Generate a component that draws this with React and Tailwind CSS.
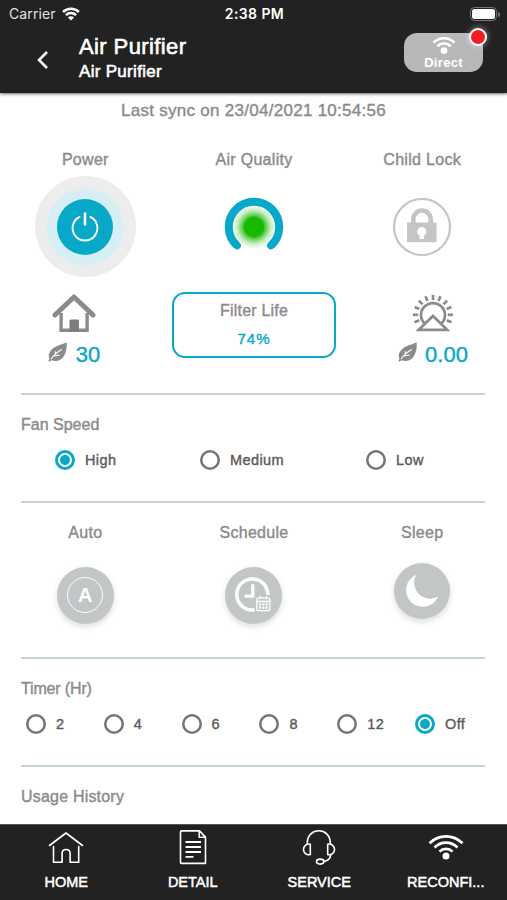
import { useState } from 'react';

const FAN_SPEEDS = [
  { label: 'High', width: 'w-[145px]' },
  { label: 'Medium', width: 'w-[166px]' },
  { label: 'Low', width: 'w-[100px]' },
];
const TIMERS = ['2', '4', '6', '8', '12', 'Off'];

function StatusWifi() {
  return (
    <svg width="18" height="14.4" viewBox="0 0 20 16" fill="none" stroke="white" strokeWidth="2.9">
      <path d="M1.2 5.5a12.6 12.6 0 0 1 17.6 0" />
      <path d="M4.4 9a8 8 0 0 1 11.2 0" />
      <path d="M10 15 6.6 11.7a4.6 4.6 0 0 1 6.800 0Z" fill="white" stroke="none" />
    </svg>
  );
}

function DirectWifi() {
  return (
    <svg width="24" height="19" viewBox="0 0 24 19" fill="none" stroke="white" strokeWidth="2.4">
      <path d="M1.5 6.6a14.8 14.8 0 0 1 21 0" />
      <path d="M5.4 10.3a9.2 9.2 0 0 1 13.2 0" />
      <circle cx="12" cy="14.6" r="3.4" fill="white" stroke="none" />
    </svg>
  );
}

function PowerIcon() {
  return (
    <svg width="30" height="30" viewBox="0 0 30 30" fill="none" stroke="white" strokeLinecap="round">
      <path d="M9.6 4.900a12.4 12.4 0 1 0 10.800 0" strokeWidth="1.9" />
      <path d="M15 1.5v11" strokeWidth="2.6" />
    </svg>
  );
}

function AirQualityGauge() {
  return (
    <svg width="60" height="60" viewBox="0 0 60 60" fill="none">
      <defs>
        <radialGradient id="glow">
          <stop offset="0.42" stopColor="#19b900" />
          <stop offset="0.58" stopColor="#6fd363" />
          <stop offset="0.78" stopColor="#c6eec1" />
          <stop offset="1" stopColor="#f6fcf5" />
        </radialGradient>
      </defs>
      <circle cx="30" cy="30" r="21.5" fill="url(#glow)" />
      <circle cx="30" cy="30" r="10" fill="#19b900" />
      <path d="M12.800 48.400a25.2 25.2 0 1 1 34.400 0" stroke="#08a8c8" strokeWidth="8" />
      <path d="M13 48.400l.2.2M47 48.400l-.2.2" stroke="#08a8c8" strokeWidth="7.4" strokeLinecap="round" />
    </svg>
  );
}

function LockIcon() {
  return (
    <svg width="58" height="58" viewBox="0 0 58 58" fill="none">
      <circle cx="29" cy="29" r="28" stroke="#c3c5c6" strokeWidth="2.2" />
      <path d="M20.3 25v-3.8a8.7 8.7 0 0 1 17.4 0V25" stroke="#c3c5c6" strokeWidth="4.6" />
      <rect x="14" y="24.500" width="29.5" height="19.7" fill="#c3c5c6" />
      <path d="M28.800 29a4.6 4.6 0 0 1 2.2 8.6v3.4h-4.4v-3.4a4.6 4.6 0 0 1 2.2-8.6Z" fill="white" />
    </svg>
  );
}

function IndoorIcon() {
  return (
    <svg width="44" height="40" viewBox="0 0 44 40" fill="none" stroke="#8b8b8b">
      <path d="M3 22 22 4l19 18" strokeWidth="5" strokeLinecap="round" strokeLinejoin="round" />
      <path d="M9.1 20v17.3h26V20" strokeWidth="3.4" />
      <path d="M17.5 38.5V28a1.5 1.5 0 0 1 1.500-1.500h6.500a1.500 1.500 0 0 1 1.500 1.500v10.500Z" fill="#7d7d7d" stroke="none" />
    </svg>
  );
}

function OutdoorIcon() {
  return (
    <svg width="42" height="39" viewBox="0 0 42 39" fill="none" stroke="#8b8b8b">
      <path d="M12.500 29.500a12 12 0 1 1 17 0" strokeWidth="2.700" />
      <path d="M6.800 35.800 21 22l14.200 13.800Z" strokeWidth="2.700" strokeLinejoin="miter" />
      <g strokeWidth="2.700">
        {[-112, -90, -67, -45, -22, 0, 22, 45, 67, 90, 112].map(a => (
          <path key={a} d="M21 6V.800" transform={`rotate(${a} 21 20.800)`} />
        ))}
      </g>
    </svg>
  );
}

function Leaf() {
  return (
    <svg width="20" height="21" viewBox="0 0 20 21" fill="none">
      <path d="M18.700.500C12.500 3 7 3.800 3.400 7.800.500 11 .200 14.300 1.500 16.900L.300 18.700l1.400 1.100 1.500-1.600c4.800 1.600 9.300.600 12.100-3.200C18.300 11 19 6 18.700.500Z" fill="#8b8b8b" />
      <path d="M3 17.200C5.800 12.800 8.800 10 13.800 7.400M7.300 12.500v-3.300M6.200 13.900l5.300-.900" stroke="white" strokeWidth="1.100" />
    </svg>
  );
}

function ScheduleIcon() {
  return (
    <svg width="58" height="58" viewBox="0 0 58 58" fill="none" stroke="white">
      <circle cx="27.800" cy="28.500" r="15.800" strokeWidth="3.600" />
      <path d="M28.300 18v12.200h-8.300" strokeWidth="3.400" />
      <rect x="30" y="29" width="18" height="18" rx="3" fill="#c3c6c7" stroke="none" />
      <rect x="32.300" y="32" width="13.400" height="13" rx="2" strokeWidth="1.300" />
      <path d="M32.300 35.600h13.400M36 30.200v3M42 30.200v3" strokeWidth="1.300" />
      <path d="M34.500 38.500h9M34.500 41.800h9" strokeWidth="2.200" strokeDasharray="2.200 1.200" />
    </svg>
  );
}

function HomeIcon() {
  return (
    <svg width="36" height="36" viewBox="0 0 36 36" fill="none" stroke="white" strokeWidth="1.600" strokeLinecap="round" strokeLinejoin="round">
      <path d="M1.500 15.500 18 3l16.500 12.500" />
      <path d="M5.500 16.500v15.700h8.600V23.500c0-5.300 8-5.300 8 0v8.700h8.600V16.500" />
    </svg>
  );
}

function DetailIcon() {
  return (
    <svg width="36" height="36" viewBox="0 0 36 36" fill="none" stroke="white" strokeWidth="1.600" strokeLinejoin="round">
      <path d="M6.500.900h18l6 6.200v26.300h-24a1 1 0 0 1-1-1V1.900a1 1 0 0 1 1-1Z" />
      <path d="M24.200 1v6.300h6.300" />
      <path d="M10.500 12h15.500M10.500 17h15.500M10.500 22h15.500M10.500 26.900h8" strokeWidth="1.800" />
    </svg>
  );
}

function ServiceIcon() {
  return (
    <svg width="36" height="36" viewBox="0 0 36 36" fill="none" stroke="white" strokeWidth="1.600" strokeLinejoin="round">
      <path d="M6.300 14.500v-1.700C6.300-3.200 29.300-3.200 29.300 12.800v1.700" />
      <path d="M9.300 14.200v10.400c-4 .7-6.800-1.800-6.800-5.200s2.800-5.900 6.800-5.200Z" />
      <path d="M26.700 14.200v10.400c4 .7 6.800-1.800 6.800-5.200s-2.800-5.900-6.800-5.200Z" />
      <path d="M29.700 24.500c-.3 4.300-3 6.500-7.200 7" />
      <ellipse cx="19.200" cy="31.600" rx="3.700" ry="2.500" />
    </svg>
  );
}

function ReconfigureIcon() {
  return (
    <svg width="36" height="36" viewBox="0 0 36 36" fill="none" stroke="white" strokeWidth="2.700">
      <path d="M1.500 13.300c9.200-9.300 23.800-9.300 33 0" />
      <path d="M6.500 17.500c6.500-6.600 16.500-6.600 23 0" />
      <path d="M11.500 21.600c3.700-3.700 9.300-3.700 13 0" />
      <circle cx="18" cy="26" r="3.500" fill="white" stroke="none" />
    </svg>
  );
}

const TABS = [
  { label: 'HOME', Icon: HomeIcon },
  { label: 'DETAIL', Icon: DetailIcon },
  { label: 'SERVICE', Icon: ServiceIcon },
  { label: 'RECONFI...', Icon: ReconfigureIcon },
];

function Radio({ label, checked, onSelect }) {
  return (
    <button onClick={onSelect} className="flex h-5 items-center gap-[10px]">
      {checked ? (
        <span className="flex size-5 items-center justify-center rounded-full border-[3px] border-[#08a8c8]">
          <span className="size-[10px] rounded-full bg-[#08a8c8]" />
        </span>
      ) : (
        <span className="size-5 rounded-full shadow-[inset_0_0_0_2.5px_#757575]" />
      )}
      <span className="text-[14.5px] leading-5 tracking-[0.4px] text-[#5c5c5c] [-webkit-text-stroke:0.4px]">{label}</span>
    </button>
  );
}

function Divider() {
  return <div className="mr-[22px] ml-[21px] h-[2px] shrink-0 bg-[#c5d5d6]" />;
}

export default function App() {
  const [speed, setSpeed] = useState('High');
  const [timer, setTimer] = useState('Off');

  return (
    <div className="flex h-[900px] w-[507px] flex-col overflow-hidden bg-white font-['Liberation_Sans',Arial,sans-serif] text-[16px] leading-5 text-[#8b8b8b] [-webkit-text-stroke:0.4px]">
      <header className="z-10 h-[93px] shrink-0 bg-[#222] text-white shadow-[0_1px_3px_rgba(0,0,0,0.6)]">
        <div className="grid h-7 grid-cols-3 items-center pr-[7px] pl-[9px] font-['Inter',sans-serif] [-webkit-text-stroke:0px]">
          <div className="flex items-center gap-[6px] text-[14px] tracking-[0.1px] text-[#e0e0e0]">
            Carrier
            <StatusWifi />
          </div>
          <div className="text-center text-[14px] font-semibold tracking-[0.4px] whitespace-nowrap">2:38 PM</div>
          <div className="flex items-center justify-end gap-px">
            <div className="h-[14px] w-[27px] rounded-[4.500px] border border-[#777] p-px">
              <div className="h-full rounded-[2.500px] bg-white" />
            </div>
            <div className="h-[5px] w-[2px] rounded-r-full bg-[#777]" />
          </div>
        </div>
        <div className="flex">
          <button className="mt-[21px] ml-[36px] h-[22px] w-[43px]" aria-label="Back">
            <svg width="13" height="20" viewBox="0 0 13 20" fill="none" stroke="white" strokeWidth="2.500">
              <path d="M11 2 3 10l8 8" />
            </svg>
          </button>
          <div className="mt-[5px] flex-1 [-webkit-text-stroke:0.6px]">
            <h1 className="text-[22px] leading-[27px] tracking-[0.4px]">Air Purifier</h1>
            <h2 className="text-[17px] leading-6 tracking-[0.300px]">Air Purifier</h2>
          </div>
          <div className="relative mt-[5px] mr-6 flex h-[39px] w-[79px] flex-col items-center rounded-[13px] bg-[#b8b8b8] pt-[3px] [-webkit-text-stroke:0px]">
            <DirectWifi />
            <span className="text-[13px] leading-4 font-bold tracking-[0.300px]">Direct</span>
            <span className="absolute -top-[5px] -right-[4px] size-[18px] rounded-full border-[2.500px] border-white bg-[#ef1f25] shadow-[0_0_6px_rgba(255,255,255,0.500)]" />
          </div>
        </div>
      </header>

      <main className="flex h-[731px] shrink-0 flex-col">
        <p className="h-[57px] pt-2 text-center text-[17px] tracking-[0.280px]">Last sync on 23/04/2021 10:54:56</p>

        <section className="grid grid-cols-3 pl-px text-center tracking-[0.300px]">
          <div className="flex flex-col items-center gap-[6px]">
            <span>Power</span>
            <button aria-label="Power" className="flex size-[101px] items-center justify-center rounded-full bg-[#ededed]">
              <span className="flex size-[76px] items-center justify-center rounded-full bg-[#d6eff5] shadow-[0_0_3px_#d6eff5]">
                <span className="flex size-[56px] items-center justify-center rounded-full bg-[#08a8c8]">
                  <PowerIcon />
                </span>
              </span>
            </button>
          </div>
          <div className="flex flex-col items-center gap-[27px]">
            <span>Air Quality</span>
            <AirQualityGauge />
          </div>
          <div className="flex flex-col items-center gap-[28px] pr-px">
            <span>Child Lock</span>
            <LockIcon />
          </div>
        </section>

        <section className="mt-[15px] flex h-[101px] pl-[47px]">
          <div className="flex w-[54px] flex-col items-center gap-[9px] pt-px">
            <IndoorIcon />
            <div className="flex h-6 items-start gap-2 text-[22px] leading-[26px] text-[#08a8c8]">
              <Leaf />
              30
            </div>
          </div>
          <div className="ml-[71px] flex h-[66px] w-[164px] flex-col items-center gap-2 rounded-[13px] border-2 border-[#08a8c8] pt-[7px]">
            <span className="tracking-[0.200px]">Filter Life</span>
            <span className="text-[15px] tracking-[1px] text-[#08a8c8]">74%</span>
          </div>
          <div className="ml-[61px] flex w-[72px] flex-col items-center gap-[9px] pt-[2px]">
            <OutdoorIcon />
            <div className="flex h-6 items-start gap-[7px] text-[22px] leading-[26px] text-[#08a8c8]">
              <Leaf />
              0.00
            </div>
          </div>
        </section>

        <Divider />
        <section className="h-[105.500px] pt-5">
          <h3 className="pl-[21px] leading-5">Fan Speed</h3>
          <div className="mt-[15px] flex pl-[55px]">
            {FAN_SPEEDS.map(s => (
              <div key={s.label} className={s.width}>
                <Radio label={s.label} checked={speed === s.label} onSelect={() => setSpeed(s.label)} />
              </div>
            ))}
          </div>
        </section>

        <Divider />
        <section className="grid h-[154px] grid-cols-3 pt-[20px] pl-px tracking-[0.300px]">
          <div className="flex flex-col items-center">
            <span>Auto</span>
            <button aria-label="Auto" className="mt-[24px] flex size-[57px] items-center justify-center rounded-full bg-[#c3c6c7] shadow-[0_3px_6px_rgba(0,0,0,0.130)]">
              <span className="flex size-[36px] items-center justify-center rounded-full border-[1.500px] border-white text-[20px] font-bold tracking-normal text-white [-webkit-text-stroke:0px]">A</span>
            </button>
          </div>
          <div className="flex flex-col items-center">
            <span>Schedule</span>
            <button aria-label="Schedule" className="mt-[24px] flex size-[57px] items-center justify-center rounded-full bg-[#c3c6c7] shadow-[0_3px_6px_rgba(0,0,0,0.130)]">
              <ScheduleIcon />
            </button>
          </div>
          <div className="flex flex-col items-center pr-px">
            <span>Sleep</span>
            <button aria-label="Sleep" className="mt-[20px] flex size-[56px] items-center justify-center rounded-full bg-[#c3c6c7] shadow-[0_3px_6px_rgba(0,0,0,0.130)]">
              <svg width="34" height="34" viewBox="0 0 34 34" fill="white">
                <path d="M11.300.700A16.700 16.700 0 1 0 33.200 22.500 16 16 0 0 1 11.300.700Z" />
              </svg>
            </button>
          </div>
        </section>

        <Divider />
        <section className="h-[106px] pt-5">
          <h3 className="pl-[21px] tracking-[-0.150px]">Timer (Hr)</h3>
          <div className="mt-[15px] flex pl-[26px]">
            {TIMERS.map(t => (
              <div key={t} className="w-[77.800px]">
                <Radio label={t} checked={timer === t} onSelect={() => setTimer(t)} />
              </div>
            ))}
          </div>
        </section>

        <Divider />
        <h3 className="pt-5 pl-[21px] tracking-[0.200px]">Usage History</h3>
      </main>

      <nav className="z-10 grid h-[76px] shrink-0 grid-cols-[repeat(4,126.500px)] overflow-hidden border-t border-[#555] bg-[#222] pl-[3px] text-white">
        {TABS.map(({ label, Icon }) => (
          <button key={label} className="flex flex-col items-center gap-[6px] pt-[5px]">
            <Icon />
            <span className="text-[14.500px] leading-5 [-webkit-text-stroke:0.500px]">{label}</span>
          </button>
        ))}
      </nav>
    </div>
  );
}
